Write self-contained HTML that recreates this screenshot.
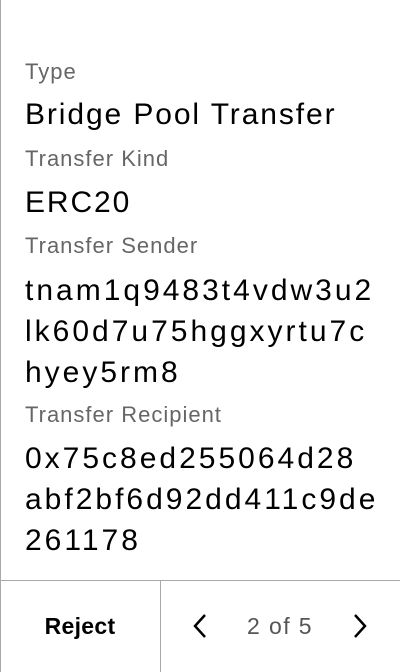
<!DOCTYPE html>
<html><head><style>
body{margin:0;width:400px;height:672px;overflow:hidden;background:#fff;font-family:"Liberation Sans",Arial,sans-serif;position:relative}
.lb{position:absolute;left:0;top:0;width:1px;height:672px;background:#aaa}
.t{position:absolute;left:25px;white-space:nowrap}
.l{font-size:22px;color:#666;line-height:24px;letter-spacing:1px}
.v{font-size:30px;color:#000;line-height:41px;letter-spacing:1.9px}
.h{font-size:30px;letter-spacing:3px}
.foot{position:absolute;left:0;top:580px;width:400px;height:1px;background:#aaa}
.div{position:absolute;left:160px;top:580px;width:1px;height:92px;background:#aaa}
</style></head><body>
<div class="lb"></div>
<div class="t l" style="top:60px">Type</div>
<div class="t v" style="top:94px">Bridge Pool Transfer</div>
<div class="t l" style="top:147px">Transfer Kind</div>
<div class="t v" style="top:182px">ERC20</div>
<div class="t l" style="top:234px">Transfer Sender</div>
<div class="t v h" style="top:270px">tnam1q9483t4vdw3u2<br>lk60d7u75hggxyrtu7c<br>hyey5rm8</div>
<div class="t l" style="top:403px">Transfer Recipient</div>
<div class="t v h" style="top:438px">0x75c8ed255064d28<br>abf2bf6d92dd411c9de<br>261178</div>
<div class="foot"></div><div class="div"></div>
<div style="position:absolute;left:0;width:160px;top:612px;text-align:center;font-size:23px;font-weight:bold;line-height:28px;letter-spacing:0.3px">Reject</div>
<svg style="position:absolute;left:190px;top:612px" width="20" height="28" viewBox="0 0 20 28"><path d="M15 3 L5 14 L15 25" fill="none" stroke="#000" stroke-width="2.5"/></svg>
<div style="position:absolute;left:230px;width:100px;top:612px;text-align:center;font-size:23px;color:#555;line-height:28px;letter-spacing:1.4px">2 of 5</div>
<svg style="position:absolute;left:350px;top:612px" width="20" height="28" viewBox="0 0 20 28"><path d="M5 3 L15 14 L5 25" fill="none" stroke="#000" stroke-width="2.5"/></svg>
</body></html>
